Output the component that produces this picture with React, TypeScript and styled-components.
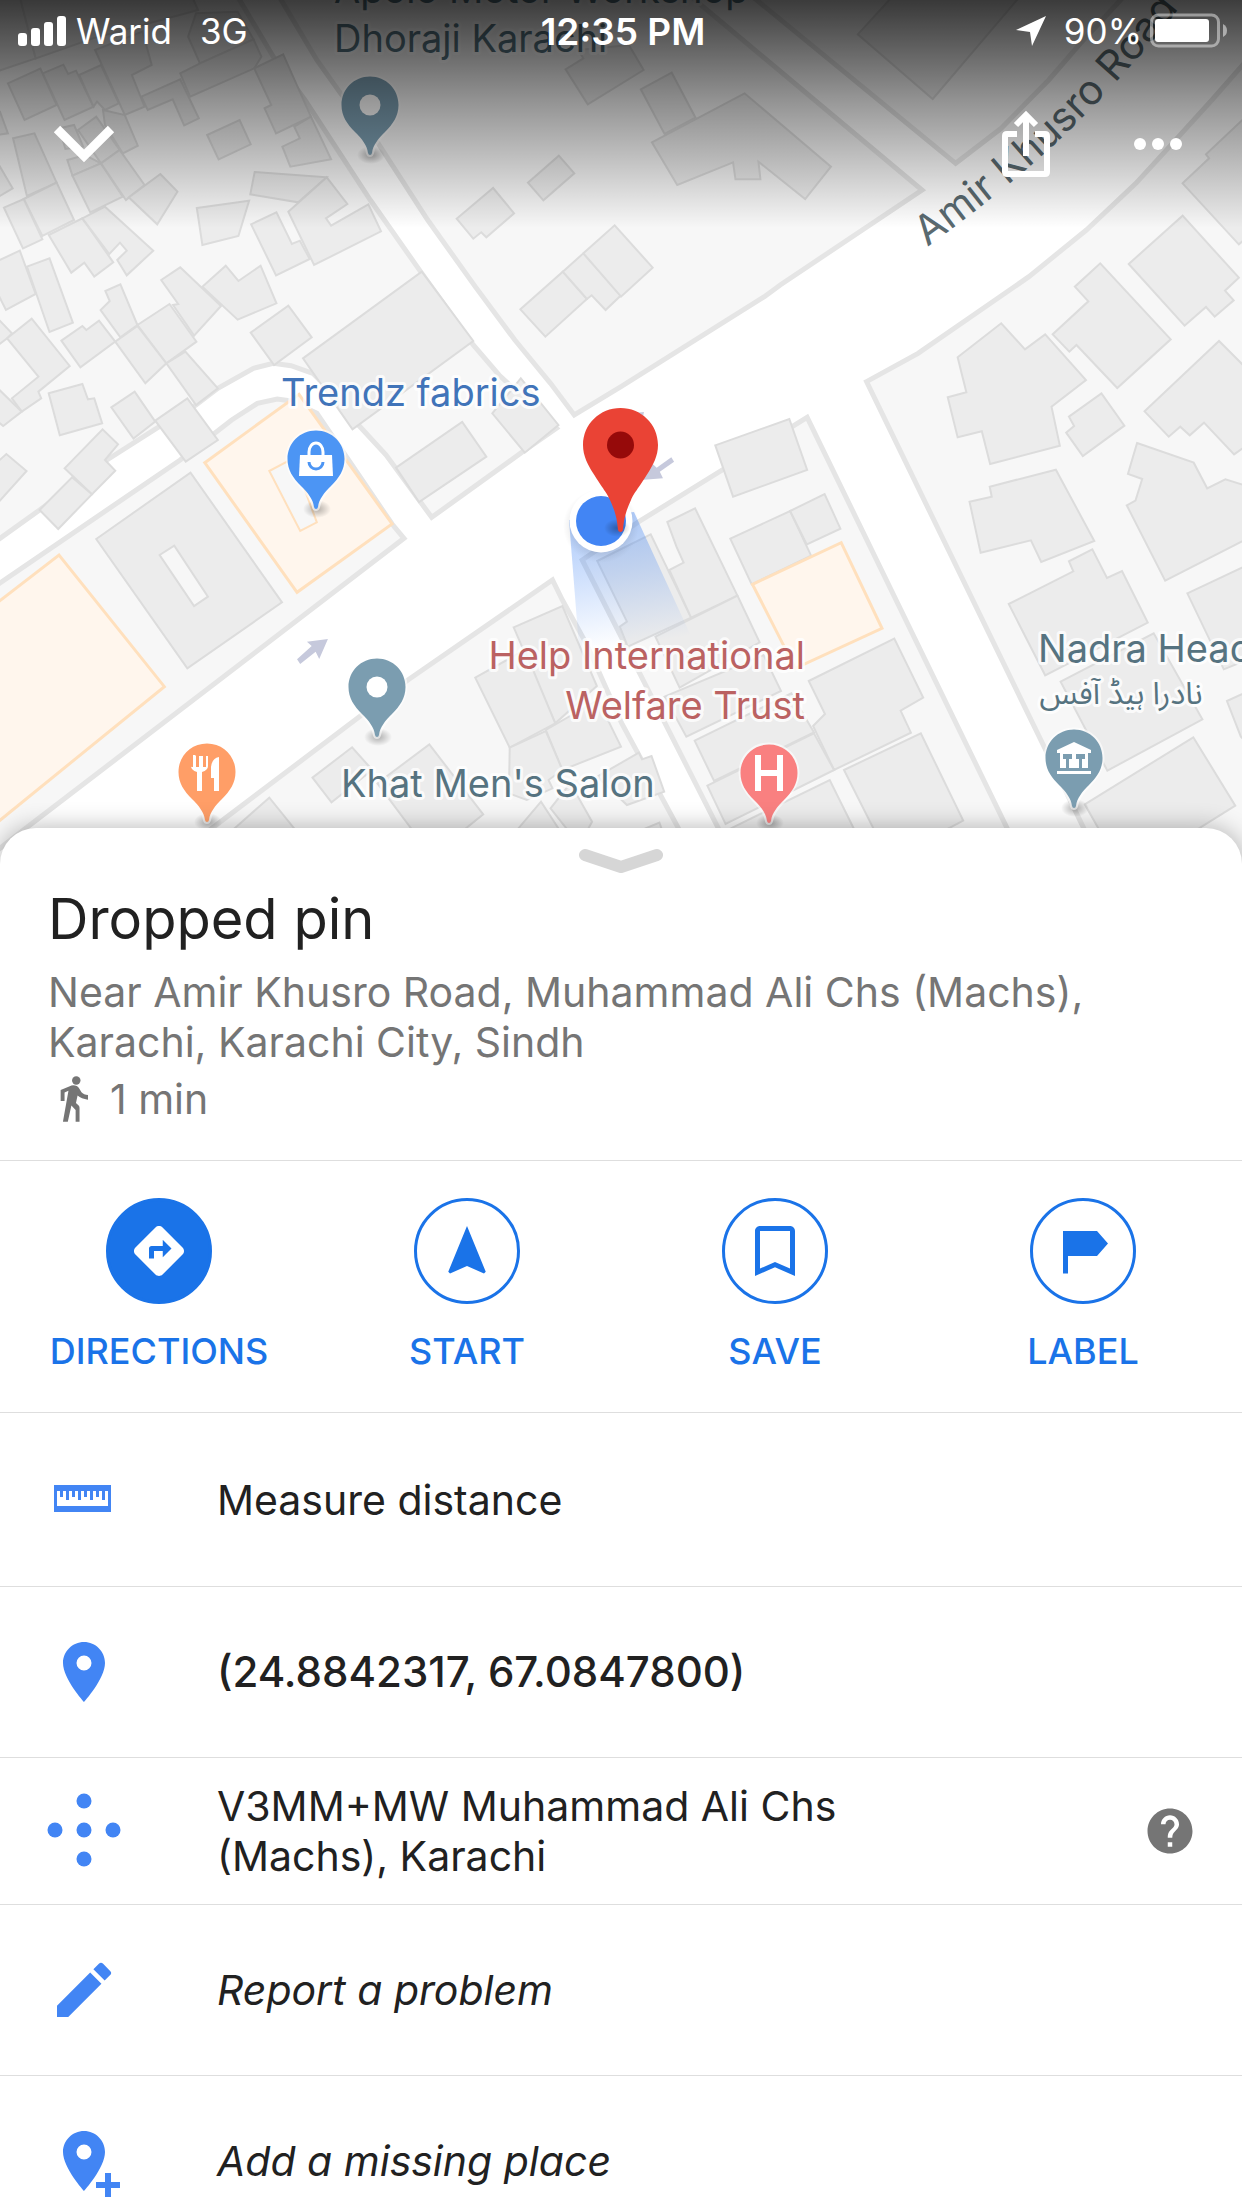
import React from "react";
import styled, { createGlobalStyle } from "styled-components";
import {
  MdDirections,
  MdEdit,
  MdHelp,
  MdNavigation,
  MdPlace,
} from "react-icons/md";

const font = `Inter, Roboto, "Liberation Sans", sans-serif`;
const blue = "#1a73e8";
const iconBlue = "#4285f4";

const GlobalStyle = createGlobalStyle`
  * { box-sizing: border-box; }
  body { margin: 0; background: #fff; font-family: ${font}; color: #212121; }
  button { font: inherit; color: inherit; background: none; border: 0; padding: 0; cursor: pointer; }
  h1, p, ul { margin: 0; padding: 0; }
`;

const Screen = styled.div`
  display: flex;
  flex-direction: column;
  height: 100vh;
  overflow: hidden;
`;

const MapArea = styled.section`
  position: relative;
  flex: none;
  height: 870px;
  margin-bottom: -42px;
  background: #fff;
  overflow: hidden;
`;

const MapCanvas = styled.svg`
  display: block;
  width: 100%;
  height: 100%;
`;

const Scrim = styled.div`
  position: absolute;
  inset: 0 0 auto 0;
  height: 228px;
  background: linear-gradient(rgba(0, 0, 0, 0.76), rgba(0, 0, 0, 0.4) 45%, rgba(0, 0, 0, 0));
`;

const TopOverlay = styled.header`
  position: absolute;
  inset: 0 0 auto 0;
  color: #fff;
`;

const StatusBar = styled.div`
  display: grid;
  grid-template-columns: 1fr auto 1fr;
  align-items: center;
  height: 62px;
  padding: 0 14px 0 18px;
  font-size: 35px;
`;

const StatusGroup = styled.div<{ $end?: boolean }>`
  display: flex;
  align-items: center;
  justify-content: ${(p) => (p.$end ? "flex-end" : "flex-start")};
  gap: 8px;
`;

const Network = styled.span`
  margin-left: 20px;
`;

const Percent = styled.span`
  margin-left: 10px;
`;

const Clock = styled.time`
  font-size: 37px;
  font-weight: 600;
`;

const NavBar = styled.nav`
  display: flex;
  align-items: center;
  height: 164px;
  padding: 0 48px;
`;

const IconButton = styled.button`
  display: grid;
  place-items: center;
  width: 72px;
  height: 96px;
  color: #fff;

  & + & {
    margin-left: 60px;
  }
`;

const Spacer = styled.div`
  flex: 1;
`;

const Sheet = styled.main`
  position: relative;
  flex: 1;
  min-height: 0;
  background: #fff;
  border-radius: 36px 36px 0 0;
  box-shadow: 0 0 24px rgba(0, 0, 0, 0.3);
`;

const HandleButton = styled.button`
  display: grid;
  place-items: center;
  width: 100%;
  height: 64px;
`;

const Summary = styled.section`
  height: 268px;
  padding: 0 48px;
  color: #757575;
  font-size: 41px;
  line-height: 50px;
`;

const Title = styled.h1`
  margin-bottom: 20px;
  color: #212121;
  font-size: 56px;
  font-weight: 400;
  line-height: 55px;
`;

const WalkTime = styled.p`
  display: flex;
  align-items: center;
  gap: 22px;
  height: 64px;
  padding-left: 12px;
`;

const Actions = styled.section`
  display: grid;
  grid-template-columns: repeat(4, 1fr);
  height: 252px;
  padding: 37px 5px 0;
  border-top: 1px solid #dedede;
`;

const Action = styled.button`
  display: flex;
  flex-direction: column;
  align-items: center;
  gap: 26px;
  height: 180px;
  color: ${blue};
  font-size: 36px;
  font-weight: 500;
  line-height: 42px;
`;

const Round = styled.span<{ $filled?: boolean }>`
  display: grid;
  place-items: center;
  width: 106px;
  height: 106px;
  border: 3px solid ${blue};
  border-radius: 50%;
  background: ${(p) => (p.$filled ? blue : "#fff")};
  color: ${(p) => (p.$filled ? "#fff" : blue)};
`;

const List = styled.ul`
  list-style: none;
`;

const Row = styled.li<{ $height: number }>`
  display: flex;
  align-items: center;
  height: ${(p) => p.$height}px;
  border-top: 1px solid #dedede;
  padding: 0 36px 0 48px;
`;

const RowButton = styled.button<{ $italic?: boolean; $medium?: boolean }>`
  display: flex;
  flex: 1;
  align-items: center;
  gap: 97px;
  text-align: left;
  font-size: ${(p) => (p.$medium ? 42 : 41)}px;
  line-height: 50px;
  font-style: ${(p) => (p.$italic ? "italic" : "normal")};
  font-weight: ${(p) => (p.$medium ? 500 : 400)};

  svg {
    flex: none;
    color: ${iconBlue};
  }
`;

const RowText = styled.span`
  max-width: 660px;
`;

const HelpButton = styled.button`
  display: grid;
  place-items: center;
  width: 72px;
  height: 72px;
  color: #757575;
`;

const blocks = [
  "-20,-20 595,-20 690,170 770,300 935,600 1062,815 1195,1035 1260,1125 1405,1285 1320,1355 1090,1552 975,1365 905,1275 840,1180 790,1120 735,1097 690,1090 640,1105 550,1165 495,1215 395,1285 270,1380 100,1530 -20,1632",
  "-20,1765 455,1380 585,1260 650,1210 700,1197 735,1203 800,1240 990,1572 1020,1615 65,2485 -60,2600 -60,1780",
  "535,2485 1030,2040 1395,1740 1420,1800 1480,1930 1525,2050 1570,2170 1713,2485 1763,2640 360,2640",
  "1470,1680 1613,1565 2038,1252 2543,2485 2600,2640 1880,2640",
  "2188,1145 2318,1060 2458,945 2598,830 2743,690 2868,550 2953,440 3060,300 3160,165 3160,2640 2800,2640",
  "700,-20 800,180 860,280 955,430 1080,660 1200,860 1300,1020 1390,1150 1450,1245 1568,1160 1930,890 1970,855 2328,570 1735,-20",
  "1890,-20 2413,490 2528,385 2648,240 2728,130 2845,-20",
];

const buildings = [
  "-10,215 90,175 50,-10 -10,-10",
  "90,175 50,-10 485,-10 500,30 235,115",
  "475,110 495,40 600,35 640,118 505,190",
  "240,150 360,95 383,195 333,225 365,320 315,345",
  "357,290 455,238 502,355 465,376 436,298 373,330",
  "455,220 505,190 640,118 660,170 642,205 480,290",
  "642,205 715,163 785,350 697,400 668,325 685,315",
  "20,250 102,206 143,315 62,360",
  "108,220 160,194 172,222 192,212 236,320 163,360",
  "200,225 255,195 300,310 265,330 245,305 236,320",
  "-10,330 0,335 20,400 -10,405",
  "33,415 87,400 143,548 68,588",
  "150,385 187,375 210,440 165,447",
  "197,390 243,350 302,450 255,490",
  "260,330 315,345 348,437 310,460 265,375",
  "170,480 215,465 255,490 183,527",
  "183,527 255,490 310,590 228,637",
  "255,490 302,450 365,555 318,600",
  "325,592 405,522 448,575 397,673",
  "-10,480 32,565 -10,595",
  "60,597 143,548 187,660 107,708",
  "10,623 60,597 107,718 58,745",
  "123,705 208,655 286,787 238,830 213,788 180,818",
  "208,655 265,620 387,752 320,826 296,780 320,752 303,728 276,762",
  "-10,785 50,752 90,882 15,930 -10,870",
  "68,800 125,775 184,968 125,996",
  "523,405 605,360 633,433 552,478",
  "743,380 785,350 836,478 733,500 713,440 757,415",
  "643,516 825,532 753,607 632,583",
  "825,532 877,612 823,655 836,677 930,613 962,694 793,795 728,635",
  "497,624 629,602 602,708 511,735",
  "634,673 698,637 737,732 757,722 782,777 697,826",
  "511,860 570,797 602,843 658,797 698,910 600,959",
  "407,840 455,802 558,918 490,1007 437,915 450,912",
  "266,873 304,853 347,975 304,1012 254,930 277,903",
  "347,975 428,912 496,1025 420,1090",
  "291,1025 347,978 420,1090 367,1150",
  "155,1022 208,978 218,990 250,962 291,1025 203,1102",
  "-10,950 30,1000 18,1015 -10,1040",
  "18,1015 80,956 176,1098 97,1175 104,1195 55,1235 30,1195 97,1130",
  "-10,1160 55,1235 8,1278 -10,1260",
  "420,1090 468,1055 550,1165 495,1215",
  "633,998 728,917 787,1012 692,1095",
  "765,1075 1065,815 1195,1023 890,1288",
  "123,1180 208,1152 222,1198 238,1195 258,1270 151,1306",
  "281,1222 340,1175 392,1265 337,1316",
  "392,1262 473,1195 550,1320 469,1385",
  "163,1405 259,1288 298,1333 265,1380 291,1412 232,1483",
  "100,1530 182,1432 232,1483 147,1587",
  "-10,1390 16,1362 67,1413 -10,1515",
  "1243,1240 1315,1135 1410,1275 1325,1358",
  "1000,1403 1167,1266 1228,1370 1058,1506",
  "243,1617 481,1418 712,1807 473,2005",
  "1297,1882 1420,1818 1507,2058 1402,2170",
  "1200,2033 1325,1950 1402,2170 1287,2243",
  "1378,2190 1510,2100 1568,2240 1420,2310",
  "1287,2243 1378,2193 1420,2310 1385,2340 1395,2365 1330,2400 1285,2380",
  "789,2333 889,2242 940,2310 837,2407",
  "953,2350 1084,2233 1220,2443 1140,2520 1060,2520",
  "540,2540 680,2393 780,2540",
  "1270,2540 1366,2405 1440,2540",
  "1390,2425 1440,2350 1495,2465 1460,2540 1440,2500",
  "1508,2330 1613,2258 1621,2278 1645,2268 1677,2375 1583,2415",
  "1600,2500 1665,2468 1680,2520",
  "1806,1336 1993,1257 2038,1410 1851,1490",
  "1508,1683 1643,1603 1745,1853 1585,1940 1565,1880 1583,1865",
  "1685,1566 1755,1525 1862,1787 1745,1853 1690,1710 1726,1688 1708,1640",
  "1844,1616 1995,1533 2048,1667 1898,1753",
  "1995,1533 2082,1482 2122,1586 2037,1633",
  "1655,1910 1862,1787 1918,1927 1716,2063",
  "1678,2090 1928,1965 1972,2073 1733,2210",
  "1754,2222 1998,2080 2055,2197 1803,2343",
  "2042,2043 2258,1916 2331,2093 2274,2132 2300,2198 2106,2310 2053,2178 2083,2142",
  "1786,2357 2055,2200 2106,2310 1832,2472",
  "2131,2310 2325,2200 2432,2462 2340,2520 2220,2520",
  "1820,2500 2095,2340 2170,2520",
  "2418,1072 2528,970 2588,1048 2639,1003 2742,1140 2655,1220 2676,1337 2500,1392 2479,1294 2418,1312 2393,1192 2440,1177",
  "2658,1003 2748,904 2714,860 2778,790 2956,1018 2821,1164 2718,1035 2700,1055",
  "2850,792 2986,647 3128,833 3093,872 3115,901 3067,950 3045,921 2991,977",
  "2986,550 3053,475 3045,463 3150,345 3150,710 3128,733",
  "2890,1234 3078,1023 3168,1130 3168,1320 3116,1363 3040,1268 3004,1306 2980,1280 2951,1310",
  "2699,1250 2781,1180 2839,1277 2734,1368 2692,1298 2712,1278",
  "2448,1505 2504,1490 2499,1460 2666,1409 2763,1623 2629,1686 2603,1621 2476,1658",
  "2871,1329 3014,1388 3048,1465 3094,1438 3168,1465 3168,1605 2942,1742 2845,1516 2867,1502 2884,1437 2848,1422",
  "2547,1812 2710,1714 2699,1684 2758,1648 2795,1734 2833,1713 2898,1868 2639,2026",
  "2998,1780 3168,1685 3168,1970 3090,2008",
  "2678,2045 2913,1900 3036,2158 2796,2312",
  "3098,2103 3168,2065 3168,2250 3133,2210",
  "2739,2413 3013,2212 3119,2417 2980,2520 2790,2520",
  "2166,103 2253,-10 2575,-10 2355,297",
  "1618,268 1696,218 1756,353 1678,402",
  "1646,427 1880,280 2098,500 2033,597 1915,485 1920,538 1857,538 1851,487 1710,555",
  "1428,208 1473,175 1460,150 1588,135 1625,210 1484,313",
  "1333,548 1411,467 1450,520 1372,601",
  "1153,656 1245,564 1298,640 1228,712 1215,697 1195,716",
  "1314,928 1421,815 1482,897 1377,1010",
  "1421,815 1473,760 1568,886 1529,930 1494,886 1482,897",
  "1473,760 1552,676 1648,803 1568,890",
];

const shops = [
  "517,1388 755,1183 990,1572 750,1777",
  "-20,1820 149,1665 415,2060 -20,2480",
  "1900,1753 2124,1628 2227,1885 2008,2005",
];

const courtyards = ["403,1665 440,1637 525,1790 490,1818"];

const arrows = [
  "828,1917 775,1925 787,1938 750,1978 758,1992 797,1955 806,1977",
  "1695,1372 1702,1385 1666,1415 1674,1435 1618,1440 1648,1392 1658,1403",
  "1606,1238 1626,1236 1624,1248",
];

type PinProps = { x: number; y: number; color: string; children: React.ReactNode };

function MapPin({ x, y, color, children }: PinProps) {
  return (
    <g transform={`translate(${x} ${y})`}>
      <ellipse cx="1" cy="50" rx="14" ry="9" fill="url(#softShadow)" />
      <path
        d="M0-28.500C16-28.500 28.500-16 28.500 0C28.500 11 23 19 15 27C8 34 3 40 2 48Q1.500 50 0 50Q-1.500 50-2 48C-3 40-8 34-15 27C-23 19-28.500 11-28.500 0C-28.500-16-16-28.500 0-28.500Z"
        fill={color}
        stroke="#fff"
        strokeOpacity=".6"
        strokeWidth="4"
        paintOrder="stroke"
      />
      {children}
    </g>
  );
}

const MapLabel = styled.text<{ $color?: string }>`
  font-family: ${font};
  font-size: 38px;
  fill: ${(p) => p.$color || "#567380"};
  stroke: rgba(255, 255, 255, 0.8);
  stroke-width: 6px;
  stroke-linejoin: round;
  paint-order: stroke;
`;

const PlainLabel = styled(MapLabel)`
  font-size: 41px;
  stroke: none;
  fill: #5a6a70;
`;

const UrduLabel = styled(MapLabel)`
  font-family: "Noto Sans Arabic", "DejaVu Sans", sans-serif;
  font-size: 31px;
`;

const Terrain = styled.g`
  polygon {
    vector-effect: non-scaling-stroke;
    stroke-width: 2px;
  }
  .block {
    fill: #f7f7f7;
    stroke: #e5e5e5;
    stroke-width: 5px;
  }
  .building {
    fill: #ececec;
    stroke: #dcdcdc;
  }
  .shop {
    fill: #fff6ed;
    stroke: #ffe0bd;
    stroke-width: 3px;
  }
  .arrow {
    fill: #c6c9dc;
  }
`;

function StreetMap() {
  return (
    <MapCanvas viewBox="0 0 1242 870" preserveAspectRatio="xMidYMin slice" role="img" aria-label="Map">
      <defs>
        <linearGradient id="beam" x1="0" y1="0" x2=".15" y2="1">
          <stop offset="0" stopColor="#4285f4" stopOpacity=".45" />
          <stop offset=".45" stopColor="#4285f4" stopOpacity=".25" />
          <stop offset=".95" stopColor="#4285f4" stopOpacity="0" />
        </linearGradient>
        <radialGradient id="softShadow">
          <stop offset="0" stopColor="#000" stopOpacity=".3" />
          <stop offset="1" stopColor="#000" stopOpacity="0" />
        </radialGradient>
        <path id="road" d="M927 247 C1003 192 1060 144 1117 81 Q1159 35 1205-25" />
      </defs>
      <Terrain transform="scale(.39605 .33333)">
        {blocks.map((p) => <polygon key={p} className="block" points={p} />)}
        {buildings.map((p) => <polygon key={p} className="building" points={p} />)}
        {courtyards.map((p) => (
          <polygon key={p} points={p} fill="#f7f7f7" stroke="#dcdcdc" />
        ))}
        {shops.map((p) => <polygon key={p} className="shop" points={p} />)}
        <polygon points="680,1413 740,1375 800,1567 758,1593" fill="#f7f7f7" stroke="#ffe0bd" />
        {arrows.map((p) => <polygon key={p} className="arrow" points={p} />)}
      </Terrain>

      <PlainLabel>
        <textPath href="#road">Amir Khusro Road</textPath>
      </PlainLabel>

      <path d="M569 520L580 660L702 660L634 512Z" fill="url(#beam)" />

      <MapLabel x="334" y="3">Apolo Motor Workshop</MapLabel>
      <MapLabel x="334" y="52">Dhoraji Karachi</MapLabel>
      <MapLabel x="281" y="406" $color="#4174b9">Trendz fabrics</MapLabel>
      <MapLabel x="805" y="669" textAnchor="end" $color="#bb6262">Help International</MapLabel>
      <MapLabel x="805" y="719" textAnchor="end" $color="#bb6262">Welfare Trust</MapLabel>
      <MapLabel x="341" y="797">Khat Men's Salon</MapLabel>
      <MapLabel x="1038" y="662">Nadra Head Office</MapLabel>
      <UrduLabel x="1121" y="704" textAnchor="middle">نادرا ہیڈ آفس</UrduLabel>

      <MapPin x={370} y={105} color="#7b9db0"><circle r="10.500" fill="#fff" /></MapPin>
      <MapPin x={377} y={687} color="#7b9db0"><circle r="10.500" fill="#fff" /></MapPin>
      <MapPin x={316} y={459} color="#4c95f4">
        <path d="M-16-4H16L17 17H-17Z" fill="#fff" />
        <path d="M-7-3V-7A7 9 0 0 1 7-7V-3" fill="none" stroke="#fff" strokeWidth="3" />
        <path d="M-7 3A7 7 0 0 0 7 3" fill="none" stroke="#4c95f4" strokeWidth="3" />
      </MapPin>
      <MapPin x={207} y={772} color="#ff9e67">
        <path
          d="M-16-16V-6Q-16-2-10 0V19H-5V0Q1-2 1-6V-16H-1V-5H-4V-16H-5.500H-8V-5H-11V-16L-12-17L-14-17V-5H-16ZM12-15V19H7V6H4V-5Q5-14 12-15Z"
          fill="#fff"
        />
      </MapPin>
      <MapPin x={769} y={773} color="#f98080">
        <path d="M-14-18H-8V-3H8V-18H14V18H8V3H-8V18H-14Z" fill="#fff" />
      </MapPin>
      <MapPin x={1074} y={758} color="#7b9db0">
        <path
          d="M0-16L17-8V-5H-17V-8ZM-14-5H14V10H8V1H11V-4H2V1H5V10H-5V1H-2V-4H-11V1H-8V10H-14ZM-17 13H17V16H-17Z"
          fill="#fff"
        />
      </MapPin>

      <ellipse cx="601" cy="526" rx="38" ry="37" fill="url(#softShadow)" />
      <circle cx="601" cy="521" r="31.500" fill="#fff" />
      <circle cx="601" cy="521" r="25" fill={iconBlue} />
      <ellipse cx="617" cy="528" rx="13" ry="9" fill="url(#softShadow)" />
      <path
        d="M620.500 408C641 408 658 424 658 445C658 456 653 465 648 473C638 489 634 493 631 500C626 511 624 518 623 530Q622.500 532 620.500 532Q618.500 532 618 530C617 518 615 511 610 500C607 493 603 489 593 473C588 465 583 456 583 445C583 424 600 408 620.500 408Z"
        fill="#ea4335"
      />
      <circle cx="620.500" cy="445" r="13.500" fill="#960a0a" />
    </MapCanvas>
  );
}

const SignalIcon = () => (
  <svg width="50" height="32" viewBox="0 0 50 32" fill="#fff" aria-hidden="true">
    <rect x="0" y="18" width="9" height="13" rx="3" />
    <rect x="13" y="13" width="9" height="18" rx="3" />
    <rect x="26" y="7" width="9" height="24" rx="3" />
    <rect x="39" y="1" width="9" height="30" rx="3" />
  </svg>
);

const LocationIcon = () => (
  <svg width="30" height="30" viewBox="0 0 30 30" fill="#fff" aria-hidden="true">
    <path d="M30 0L16 30L14 16L0 14Z" />
  </svg>
);

const BatteryIcon = () => (
  <svg width="78" height="36" viewBox="0 0 78 36" aria-hidden="true">
    <rect x="1.500" y="2" width="67" height="31" rx="7" fill="none" stroke="#fff" strokeOpacity=".45" strokeWidth="3" />
    <rect x="5" y="6" width="54" height="23" rx="3" fill="#fff" />
    <path d="M73 11Q77 13 77 17.500T73 24Z" fill="#fff" opacity=".5" />
  </svg>
);

const WalkIcon = () => (
  <svg width="28" height="46" viewBox="0 0 86 140" fill="currentColor" aria-hidden="true">
    <circle cx="50" cy="13" r="13" />
    <path d="M30 31C40 25 54 29 59 38L66 49C70 54 78 57 86 58V72C72 70 62 66 54 59L49 82L58 91Q60 94 60 98V140H48V104L35 90L24 140H9L26 45L14 50V76H2V42Z" />
  </svg>
);

const BookmarkIcon = () => (
  <svg width="60" height="60" viewBox="0 0 24 24" aria-hidden="true">
    <path
      fill="currentColor"
      d="M18 2H6c-1.100 0-2 .9-2 2v18l8-3.500 8 3.500V4c0-1.100-.9-2-2-2zm0 17-6-2.600L6 19V4h12v15z"
    />
  </svg>
);

const FlagIcon = () => (
  <svg width="60" height="60" viewBox="0 0 24 24" aria-hidden="true">
    <path fill="currentColor" d="M4 4h13.600l4.400 5-4.400 5H6v7H4z" />
  </svg>
);

const RulerIcon = () => (
  <svg width="72" height="72" viewBox="0 0 72 72" aria-hidden="true">
    <path
      fill="currentColor"
      fillRule="evenodd"
      d="M6 21H63V48H6ZM9 27V42H60V27H57V36H54V27H51V33H48V27H45V36H42V27H39V33H36V27H33V36H30V27H27V33H24V27H21V36H18V27H15V33H12V27Z"
    />
  </svg>
);

const PlusCodeIcon = () => (
  <svg width="72" height="72" viewBox="0 0 72 72" fill="currentColor" overflow="visible" aria-hidden="true">
    <circle cx="36" cy="35" r="7.500" />
    <circle cx="7" cy="35" r="7.500" />
    <circle cx="65" cy="35" r="7.500" />
    <circle cx="36" cy="6" r="7.500" />
    <circle cx="36" cy="64" r="7.500" />
  </svg>
);

const AddPlaceIcon = () => (
  <svg width="72" height="72" viewBox="0 0 24 24" fill="currentColor" overflow="visible" aria-hidden="true">
    <path d="M12 2C8.130 2 5 5.130 5 9c0 5.250 7 13 7 13s7-7.750 7-13c0-3.870-3.130-7-7-7zm0 9.500a2.500 2.500 0 0 1 0-5 2.500 2.500 0 0 1 0 5z" />
    <path d="M19 16h2v3h3v2h-3v3h-2v-3h-3v-2h3z" />
  </svg>
);

const actions = [
  { name: "DIRECTIONS", icon: <MdDirections size={60} />, filled: true },
  { name: "START", icon: <MdNavigation size={60} /> },
  { name: "SAVE", icon: <BookmarkIcon /> },
  { name: "LABEL", icon: <FlagIcon /> },
];

const rows = [
  { text: "Measure distance", icon: <RulerIcon />, height: 174 },
  { text: "(24.8842317, 67.0847800)", icon: <MdPlace size={72} />, height: 171, medium: true },
  { text: "V3MM+MW Muhammad Ali Chs (Machs), Karachi", icon: <PlusCodeIcon />, height: 147, help: true },
  { text: "Report a problem", icon: <MdEdit size={72} />, height: 171, italic: true },
  { text: "Add a missing place", icon: <AddPlaceIcon />, height: 171, italic: true },
];

export default function App() {
  return (
    <Screen>
      <GlobalStyle />
      <MapArea>
        <StreetMap />
        <Scrim />
        <TopOverlay>
          <StatusBar>
            <StatusGroup>
              <SignalIcon />
              <span>Warid</span>
              <Network>3G</Network>
            </StatusGroup>
            <Clock>12:35 PM</Clock>
            <StatusGroup $end>
              <LocationIcon />
              <Percent>90%</Percent>
              <BatteryIcon />
            </StatusGroup>
          </StatusBar>
          <NavBar>
            <IconButton aria-label="Back">
              <svg width="72" height="72" viewBox="0 0 72 72" fill="none" stroke="#fff" strokeWidth="9">
                <path d="M9 21L36 48L63 21" />
              </svg>
            </IconButton>
            <Spacer />
            <IconButton aria-label="Share">
              <svg width="72" height="84" viewBox="0 0 72 84" fill="none" stroke="#fff" strokeWidth="6">
                <path d="M27 32H17Q15 32 15 34V70Q15 72 17 72H55Q57 72 57 70V34Q57 32 55 32H45M36 54V14" />
                <path d="M26 23L36 13L46 23" />
              </svg>
            </IconButton>
            <IconButton aria-label="More">
              <svg width="72" height="72" viewBox="0 0 72 72" fill="#fff">
                <circle cx="18" cy="36" r="6" />
                <circle cx="36" cy="36" r="6" />
                <circle cx="54" cy="36" r="6" />
              </svg>
            </IconButton>
          </NavBar>
        </TopOverlay>
      </MapArea>

      <Sheet>
        <HandleButton aria-label="Collapse details">
          <svg width="84" height="26" viewBox="0 0 84 26" fill="none" stroke="#d6d6d6" strokeWidth="12" strokeLinecap="round" strokeLinejoin="round">
            <path d="M6 8L42 20L78 8" />
          </svg>
        </HandleButton>
        <Summary>
          <Title>Dropped pin</Title>
          <p>Near Amir Khusro Road, Muhammad Ali Chs (Machs), Karachi, Karachi City, Sindh</p>
          <WalkTime>
            <WalkIcon />
            1 min
          </WalkTime>
        </Summary>
        <Actions>
          {actions.map((a) => (
            <Action key={a.name}>
              <Round $filled={a.filled}>{a.icon}</Round>
              {a.name}
            </Action>
          ))}
        </Actions>
        <List>
          {rows.map((r) => (
            <Row key={r.text} $height={r.height}>
              <RowButton $italic={r.italic} $medium={r.medium}>
                {r.icon}
                <RowText>{r.text}</RowText>
              </RowButton>
              {r.help && (
                <HelpButton aria-label="About plus codes">
                  <MdHelp size={54} />
                </HelpButton>
              )}
            </Row>
          ))}
        </List>
      </Sheet>
    </Screen>
  );
}
